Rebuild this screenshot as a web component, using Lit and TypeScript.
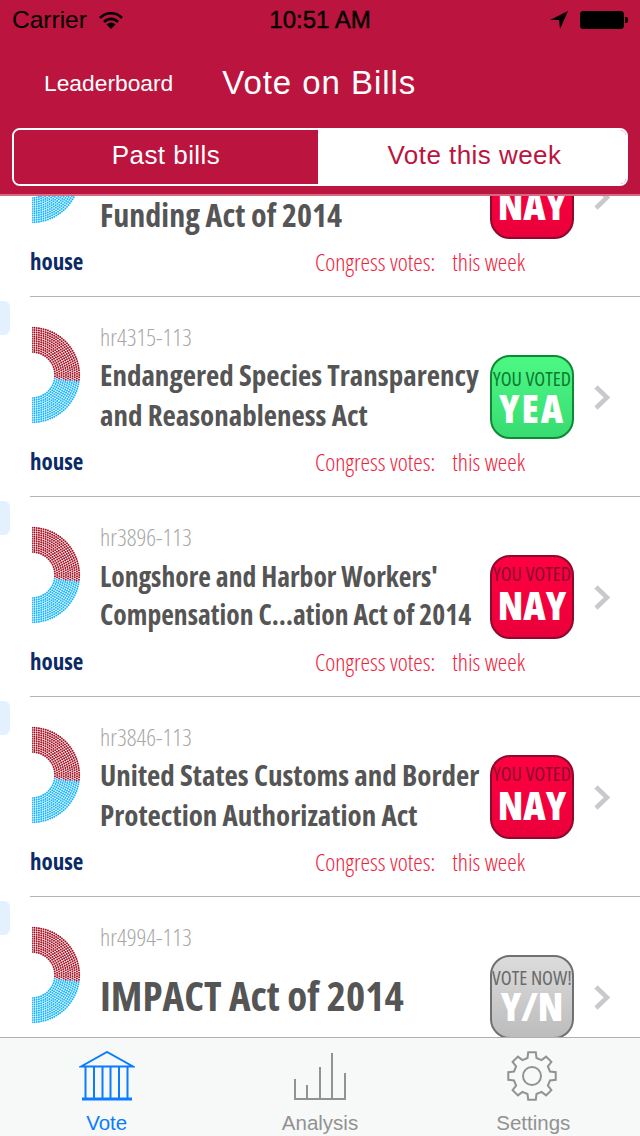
import { LitElement, html, css, svg } from "lit";
import { customElement } from "lit/decorators.js";

interface Bill {
  id: string;
  lines: string[];
  size?: "big" | "tight" | "wide";
  badge: "yea" | "nay" | "now";
}

const BILLS: Bill[] = [
  { id: "", lines: ["\u00a0", "Funding Act of 2014"], size: "wide", badge: "nay" },
  {
    id: "hr4315-113",
    lines: ["Endangered Species Transparency", "and Reasonableness Act"],
    badge: "yea",
  },
  {
    id: "hr3896-113",
    lines: ["Longshore and Harbor Workers'", "Compensation C…ation Act of 2014"],
    size: "tight",
    badge: "nay",
  },
  {
    id: "hr3846-113",
    lines: ["United States Customs and Border", "Protection Authorization Act"],
    badge: "nay",
  },
  { id: "hr4994-113", lines: ["IMPACT Act of 2014"], size: "big", badge: "now" },
];

const BADGE_TEXT = {
  yea: ["YOU VOTED", "YEA"],
  nay: ["YOU VOTED", "NAY"],
  now: ["VOTE NOW!", "Y/N"],
};

function donut() {
  const dots = [];
  for (let row = 0; row < 12; row++) {
    const r = 23 + row * 2.2;
    const count = Math.round((Math.PI * r) / 2.3);
    for (let i = 0; i <= count; i++) {
      const a = -90 + (180 * i) / count;
      const rad = (a * Math.PI) / 180;
      const x = r * Math.cos(rad);
      const y = 49 + r * Math.sin(rad);
      dots.push(
        svg`<circle cx=${x.toFixed(2)} cy=${y.toFixed(2)} r="1" fill=${a < 8 ? "#a50f22" : "#14b4ff"}></circle>`
      );
    }
  }
  return html`<svg class="donut" viewBox="0 0 50 98" width="50" height="98">${dots}</svg>`;
}

function gearPath() {
  const cx = 25;
  const cy = 25;
  const teeth = 8;
  const pts: string[] = [];
  for (let i = 0; i < teeth; i++) {
    const mid = (i * 360) / teeth - 90;
    const corners: [number, number][] = [
      [mid - 14, 18.5],
      [mid - 9, 24],
      [mid + 9, 24],
      [mid + 14, 18.5],
    ];
    for (const [deg, r] of corners) {
      const rad = (deg * Math.PI) / 180;
      pts.push(`${(cx + r * Math.cos(rad)).toFixed(1)} ${(cy + r * Math.sin(rad)).toFixed(1)}`);
    }
  }
  return `M${pts.join(" L")} Z`;
}

@customElement("app-root")
export class AppRoot extends LitElement {
  static styles = css`
    :host {
      display: flex;
      flex-direction: column;
      width: 640px;
      height: 1136px;
      overflow: hidden;
      position: relative;
      background: #fff;
      font-family: "Liberation Sans", Arial, sans-serif;
    }

    .top {
      background: #bb143e;
      height: 194px;
      flex: none;
      border-bottom: 2px solid #d66a85;
      display: flex;
      flex-direction: column;
      z-index: 1;
    }

    .status {
      height: 40px;
      display: flex;
      align-items: center;
      justify-content: space-between;
      padding: 0 16px 0 12px;
      position: relative;
      color: #000;
      font-size: 24.5px;
    }

    .status-left,
    .status-right {
      display: flex;
      align-items: center;
      gap: 12px;
    }

    .clock {
      position: absolute;
      left: 0;
      right: 0;
      text-align: center;
      font-size: 24px;
      -webkit-text-stroke: 0.4px #000;
    }

    .battery {
      width: 44px;
      height: 18px;
      border: 1px solid #000;
      border-radius: 3px;
      box-sizing: border-box;
      background: #000;
      position: relative;
    }

    .battery::after {
      content: "";
      position: absolute;
      right: -5px;
      top: 5px;
      width: 3px;
      height: 6px;
      background: #000;
      border-radius: 0 2px 2px 0;
    }

    .nav {
      height: 88px;
      box-sizing: border-box;
      padding: 0 0 2px 44px;
      display: flex;
      align-items: center;
      color: #fff;
      gap: 49px;
    }

    .nav-left {
      font-size: 22.8px;
    }

    .nav-title {
      font-size: 33px;
      letter-spacing: 0.95px;
    }

    .segments {
      margin: 0 12px;
      height: 58px;
      display: flex;
      box-sizing: border-box;
      border: 2px solid #fff;
      border-radius: 8px;
      overflow: hidden;
      font-size: 26px;
      letter-spacing: 0.45px;
    }

    .segment {
      flex: 1;
      display: flex;
      align-items: center;
      justify-content: center;
      padding: 0 0 4px 5px;
      color: #bb143e;
      background: #fff;
    }

    .segment.on {
      color: #fff;
      background: #bb143e;
      flex: none;
      width: 304px;
      box-sizing: border-box;
      padding-left: 0;
    }

    .list {
      flex: 1;
      min-height: 0;
      overflow: hidden;
    }

    .rows {
      margin-top: -99px;
    }

    .row {
      height: 200px;
      box-sizing: border-box;
      padding-bottom: 22px;
      position: relative;
      display: grid;
      grid-template-columns: 70px 390px 84px auto;
      grid-template-rows: 1fr 26px;
      margin-left: 30px;
      border-bottom: 1px solid #b4b4b4;
    }

    .tab {
      position: absolute;
      left: -30px;
      top: 4px;
      width: 10px;
      height: 34px;
      border-radius: 0 6px 6px 0;
      background: #e3f0fe;
    }

    .donut {
      display: block;
      margin: 29px 0 0 2px;
    }

    .info {
      padding-top: 28px;
      color: #555;
      font-family: "Open Sans", sans-serif;
      font-stretch: condensed;
    }

    .bill-id {
      color: #a8a8a8;
      font-size: 24px;
      font-weight: 300;
      line-height: 24px;
      margin-bottom: 6px;
    }

    .title {
      font-size: 29px;
      line-height: 40px;
      font-weight: 700;
      white-space: nowrap;
    }

    .title.wide {
      font-size: 32px;
    }

    .title.tight {
      font-size: 27.6px;
      line-height: 38px;
      position: relative;
      top: 2px;
    }

    .title.big {
      font-size: 41px;
      line-height: 60px;
      margin-top: 16px;
    }

    .badge {
      width: 84px;
      height: 84px;
      box-sizing: border-box;
      margin-top: 58px;
      border-radius: 20px;
      border: 2px solid;
      text-align: center;
      font-family: "Open Sans", sans-serif;
      font-stretch: condensed;
      overflow: hidden;
    }

    .badge .small {
      font-size: 20px;
      line-height: 20px;
      margin-top: 12px;
      white-space: nowrap;
    }

    .badge .large {
      font-size: 39px;
      line-height: 36px;
      font-weight: 800;
      color: #fff;
      white-space: nowrap;
    }

    .badge.yea {
      background: linear-gradient(#4cf884, #38dc72);
      border-color: #0d8a34;
      color: #0d7a30;
    }

    .badge.yea .large {
      letter-spacing: 2px;
      margin-top: 1px;
    }

    .badge.nay {
      background: linear-gradient(#ff0040, #ea003a);
      border-color: #8c0a2c;
      color: #8c0a30;
    }

    .badge.nay .small {
      margin-top: 7px;
    }

    .badge.nay .large {
      margin-top: 3px;
    }

    .badge.now {
      background: linear-gradient(#dcdcdc, #bcbcbc);
      border-color: #707070;
      color: #6a6a6a;
    }

    .badge.now .small {
      margin-top: 11px;
    }

    .chevron {
      margin: 88px 0 0 20px;
    }

    .foot {
      grid-column: 1 / -1;
      display: flex;
      align-items: center;
      font-family: "Open Sans", sans-serif;
      font-stretch: condensed;
    }

    .chamber {
      color: #0b2a66;
      font-weight: 700;
      font-size: 23px;
      width: 285px;
    }

    .votes {
      color: #f0203a;
      font-size: 24px;
      font-weight: 300;
      display: flex;
      gap: 17px;
    }

    .tabs {
      height: 98px;
      flex: none;
      background: #f7f8f8;
      border-top: 1px solid #b0b0b0;
      display: grid;
      grid-template-columns: repeat(3, 1fr);
      z-index: 1;
    }

    .tab-item {
      display: flex;
      flex-direction: column;
      align-items: center;
      gap: 10px;
      padding-top: 13px;
      color: #929292;
      font-size: 20.5px;
    }

    .tab-item.on {
      color: #0a7cff;
    }
  `;

  private renderRow(bill: Bill) {
    const [small, large] = BADGE_TEXT[bill.badge];
    return html`
      <div class="row">
        <div class="tab"></div>
        ${donut()}
        <div class="info">
          <div class="bill-id">${bill.id || "\u00a0"}</div>
          ${bill.lines.map((line) => html`<div class="title ${bill.size ?? ""}">${line}</div>`)}
        </div>
        <div class="badge ${bill.badge}">
          <div class="small">${small}</div>
          <div class="large">${large}</div>
        </div>
        <svg class="chevron" width="16" height="25" viewBox="0 0 16 25">
          <path d="M2 2 L13 12.5 L2 23" fill="none" stroke="#c8c8cd" stroke-width="4.5"></path>
        </svg>
        <div class="foot">
          <div class="chamber">house</div>
          <div class="votes"><span>Congress votes:</span><span>this week</span></div>
        </div>
      </div>
    `;
  }

  render() {
    return html`
      <div class="top">
        <div class="status">
          <div class="status-left">
            <span>Carrier</span>
            <svg width="24" height="18" viewBox="0 0 24 18">
              <path d="M1 7 A15 15 0 0 1 23 7 M5 11 A9.5 9.5 0 0 1 19 11" fill="none" stroke="#000" stroke-width="2.6"></path>
              <path d="M7.5 13.5 A6 6 0 0 1 16.5 13.5 L12 18 Z" fill="#000"></path>
            </svg>
          </div>
          <div class="clock">10:51 AM</div>
          <div class="status-right">
            <svg width="18" height="18" viewBox="0 0 18 18"><path d="M0 9 L18 0 L10 18 L9 9 Z" fill="#000"></path></svg>
            <div class="battery"></div>
          </div>
        </div>
        <div class="nav">
          <div class="nav-left">Leaderboard</div>
          <div class="nav-title">Vote on Bills</div>
        </div>
        <div class="segments">
          <div class="segment on">Past bills</div>
          <div class="segment">Vote this week</div>
        </div>
      </div>
      <div class="list">
        <div class="rows">${BILLS.map((b) => this.renderRow(b))}</div>
      </div>
      <div class="tabs">
        <div class="tab-item on">
          <svg width="56" height="50" viewBox="0 0 56 50" fill="none" stroke="#0a7cff" stroke-width="2">
            <path d="M2 15.5 L28 1 L54 15.5 Z M6.5 16 V47 M15 16 V47 M23.5 16 V47 M31.5 16 V47 M40 16 V47 M48.5 16 V47"></path>
            <path d="M3 48 H53" stroke-width="3"></path>
          </svg>
          Vote
        </div>
        <div class="tab-item">
          <svg width="56" height="50" viewBox="0 0 56 50" fill="none" stroke="#929292" stroke-width="2">
            <path d="M3 28 V48 H53 V22 M15 34 V48 M28 16 V48 M40 2 V48"></path>
          </svg>
          Analysis
        </div>
        <div class="tab-item">
          <svg width="52" height="50" viewBox="0 0 52 50" fill="none" stroke="#929292" stroke-width="2">
            <path d=${gearPath()}></path>
            <circle cx="25" cy="25" r="9"></circle>
          </svg>
          Settings
        </div>
      </div>
    `;
  }
}
